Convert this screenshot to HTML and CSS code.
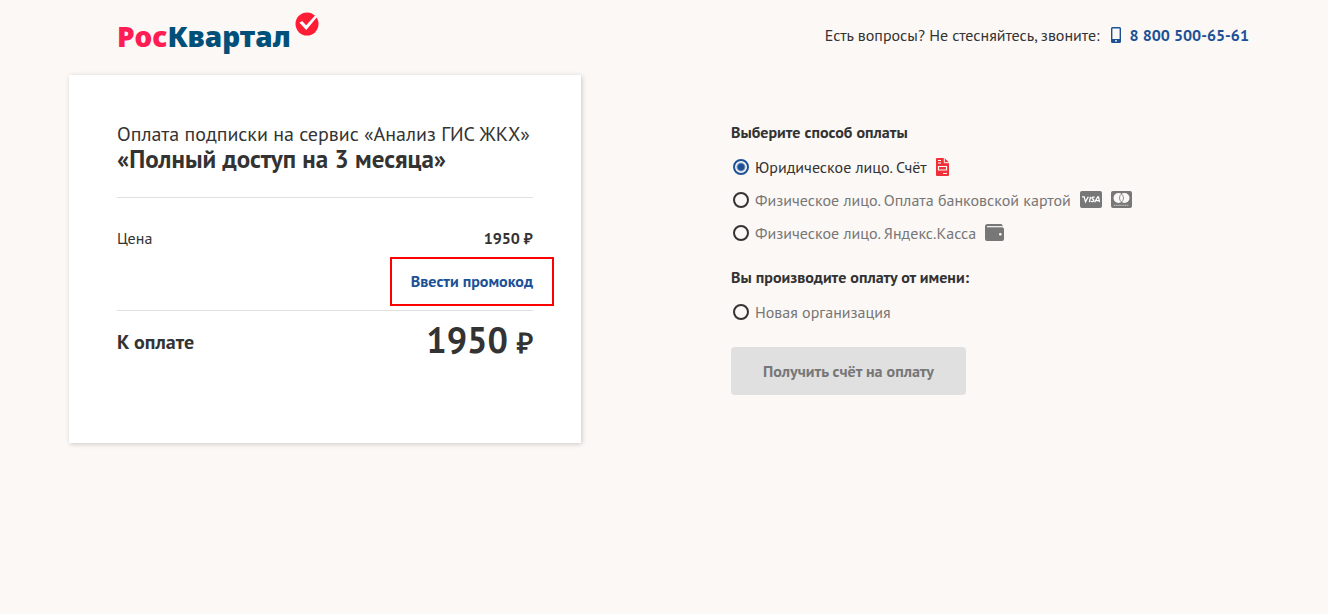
FILE: index.html
```html
<!DOCTYPE html>
<html lang="ru">
<head>
    <meta charset="UTF-8">
    <meta name="viewport" content="width=device-width, initial-scale=1.0">
    <title>РосКвартал — оплата подписки</title>
    <link rel="stylesheet" href="styles.css">
</head>
<body>

<div class="page">
    <header class="header">
        <a class="logo" href="#">
            <span class="logo__text"><span class="logo__accent">Рос</span>Квартал</span>
            <svg class="logo__mark" width="24" height="24" viewBox="0 0 24 24" aria-hidden="true">
                <circle cx="12" cy="12" r="11.5" fill="#ff1d36"/>
                <path d="M4.5 10.8 7.2 9l3.900 4.300L20.600 3l1.600 1.700L11.300 18z" fill="#fff"/>
            </svg>
        </a>
        <div class="contacts">
            <span>Есть вопросы? Не стесняйтесь, звоните:</span>
            <a class="contacts__phone" href="tel:88005006561">
                <svg width="10" height="16" viewBox="0 0 10 16" aria-hidden="true">
                    <path fill="#1c5196" fill-rule="evenodd" d="M1.5 0h7A1.5 1.5 0 0 1 10 1.500v13A1.500 1.500 0 0 1 8.500 16h-7A1.500 1.500 0 0 1 0 14.500v-13A1.500 1.500 0 0 1 1.500 0zM1.400 1.500V12h7.200V1.500zM4 13.200v1.400h2v-1.400z"/>
                </svg>
                8 800 500-65-61
            </a>
        </div>
    </header>

    <main class="checkout">
        <section class="order">
            <div class="order__head">
                <p class="order__caption">Оплата подписки на сервис «Анализ ГИС ЖКХ»</p>
                <h1 class="order__title">«Полный доступ на 3 месяца»</h1>
            </div>
            <div class="order__details">
                <div class="order__row">
                    <span>Цена</span>
                    <span class="order__price">1950 <span class="ruble">₽</span></span>
                </div>
                <button class="order__promo" type="button">Ввести промокод</button>
            </div>
            <div class="order__row order__row--total">
                <span class="order__label">К оплате</span>
                <span class="order__total">1950 <span class="ruble ruble--large">₽</span></span>
            </div>
        </section>

        <form class="payment">
            <fieldset class="payment__group">
                <legend class="payment__legend">Выберите способ оплаты</legend>
                <label class="option">
                    <input class="option__input" type="radio" name="method" checked>
                    <span class="option__text">Юридическое лицо. Счёт</span>
                    <svg width="13" height="18" viewBox="0 0 13 18" aria-hidden="true">
                        <path d="M1 0h7.500L13 4.500V17a1 1 0 0 1-1 1H1a1 1 0 0 1-1-1V1a1 1 0 0 1 1-1z" fill="#ef3039"/>
                        <path d="M8.300 0v4.700H13M2 2.500h3M2 5h3M7 15.500h4" fill="none" stroke="#fcf8f5" stroke-width="1"/>
                        <path d="M2.500 8.500h8v3.500h-8z" fill="none" stroke="#fcf8f5" stroke-width="1.200"/>
                    </svg>
                </label>
                <label class="option">
                    <input class="option__input" type="radio" name="method">
                    <span class="option__text">Физическое лицо. Оплата банковской картой</span>
                    <svg width="22" height="17" viewBox="0 0 22 17" aria-hidden="true">
                        <rect width="22" height="17" rx="2" fill="#777"/>
                        <path d="M2 5.800h2.200l1.300 5L8.300 5.800M10.500 5.800 9.400 11.200M14.600 6.400c-1.300-.6-2.700-.3-2.700.7 0 1.100 2 1 1.900 2.300-.1 1.300-1.900 1.400-3 .8M14.700 11.200 17.700 6h.8l1 5.200M16 9.600h3" fill="none" stroke="#fff" stroke-width="1.300"/>
                    </svg>
                    <svg width="21" height="17" viewBox="0 0 21 17" aria-hidden="true">
                        <rect width="21" height="17" rx="2" fill="#777"/>
                        <circle cx="7.500" cy="7" r="5" fill="#fcf8f5"/>
                        <circle cx="13.500" cy="7" r="5" fill="#fcf8f5"/>
                        <path d="M10.500 3a5 5 0 0 0 0 8 5 5 0 0 0 0-8z" fill="none" stroke="#777" stroke-width=".8"/>
                        <path d="M3 14.300h15" stroke="#ccc" stroke-width="1" stroke-dasharray="1.500 .6"/>
                    </svg>
                </label>
                <label class="option">
                    <input class="option__input" type="radio" name="method">
                    <span class="option__text">Физическое лицо. Яндекс.Касса</span>
                    <svg width="19" height="17" viewBox="0 0 19 17" aria-hidden="true">
                        <path d="M2.500 0H16a1.500 1.500 0 0 1 1.500 1.500V3.500a1.500 1.500 0 0 1 1.500 1.500V15a2 2 0 0 1-2 2H2a2 2 0 0 1-2-2V2.500A2.500 2.500 0 0 1 2.500 0z" fill="#777"/>
                        <path d="M2 2.700h15.500" stroke="#fcf8f5" stroke-width="1.200"/>
                        <circle cx="15.300" cy="10.300" r="1.300" fill="#fff"/>
                    </svg>
                </label>
            </fieldset>
            <fieldset class="payment__group">
                <legend class="payment__legend">Вы производите оплату от имени:</legend>
                <label class="option">
                    <input class="option__input" type="radio" name="payer">
                    <span class="option__text">Новая организация</span>
                </label>
            </fieldset>
            <button class="payment__submit" type="submit" disabled>Получить счёт на оплату</button>
        </form>
    </main>
</div>

</body>
</html>
```
FILE: styles.css
```css
* {
    box-sizing: border-box;
}
body {
    margin: 0;
    background: #fcf8f5;
    color: #333;
    font: 16px/24px "PT Sans", "Noto Sans", sans-serif;
}
button {
    font: inherit;
    cursor: pointer;
}
.page {
    max-width: 1190px;
    margin: 0 auto;
    padding-bottom: 48px;
}
.header {
    display: flex;
    justify-content: space-between;
    align-items: flex-start;
    min-height: 75px;
    padding: 12px 10px 0 48px;
}
.logo {
    display: flex;
    gap: 4px;
    color: #00507a;
    text-decoration: none;
}
.logo__text {
    padding-top: 8px;
    font-family: "Noto Sans", sans-serif;
    font-size: 28px;
    font-weight: 900;
    line-height: 32px;
}
.logo__accent {
    color: #ff1d53;
}
.contacts {
    display: flex;
    gap: 11px;
    padding-top: 11px;
}
.contacts__phone {
    display: flex;
    align-items: center;
    gap: 9px;
    color: #1c5196;
    font-weight: 700;
    text-decoration: none;
}
.checkout {
    display: grid;
    grid-template-columns: 512fr 528fr;
    gap: 150px;
    align-items: start;
}
.order {
    padding: 48px 48px 76px;
    background: #fff;
    box-shadow: 1px 1px 5px rgba(0, 0, 0, 0.2);
}
.order__head {
    padding-bottom: 24px;
    border-bottom: 1px solid #e0e0e0;
}
.order__caption {
    margin: 0;
    font-size: 20px;
    line-height: 22px;
    white-space: nowrap;
}
.order__title {
    margin: 0;
    font-size: 25px;
    line-height: 28px;
}
.order__details {
    display: flex;
    flex-direction: column;
    padding: 28px 0 4px;
    border-bottom: 1px solid #e0e0e0;
}
.order__row {
    display: flex;
    justify-content: space-between;
    align-items: center;
}
.order__row--total {
    height: 56px;
    padding-top: 6px;
}
.order__price {
    font-weight: 700;
}
.order__promo {
    align-self: flex-end;
    margin: 7px -21px 0 0;
    padding: 0 19px;
    border: 2px solid #f00;
    background: none;
    color: #1c5196;
    font-weight: 700;
    line-height: 45px;
}
.order__label {
    font-size: 20px;
    font-weight: 700;
}
.order__total {
    font-size: 36px;
    font-weight: 700;
}
.ruble {
    font-family: "Open Sans", sans-serif;
    font-size: 15px;
    line-height: 1;
}
.ruble--large {
    font-size: 28px;
}
.payment {
    padding-top: 45px;
}
.payment__group {
    margin: 0 0 16px;
    padding: 0;
    border: 0;
}
.payment__legend {
    margin-bottom: 6px;
    padding: 0;
    font-weight: 700;
}
.option {
    display: flex;
    align-items: center;
    gap: 9px;
    min-height: 33px;
    color: #777;
}
.option:has(:checked) {
    color: #333;
}
.option__input {
    appearance: none;
    width: 16px;
    height: 16px;
    margin: 0 -3px 0 2px;
    border: 2px solid #333;
    border-radius: 50%;
}
.option__input:checked {
    border-color: #1c5196;
    background: radial-gradient(circle, #1c5196 3px, transparent 5px);
}
.payment__submit {
    margin-top: 3px;
    padding: 0 32px;
    border: 0;
    border-radius: 4px;
    background: #e0e0e0;
    color: #777;
    font-weight: 700;
    line-height: 48px;
}
@media (max-width: 1100px) {
    .checkout {
        gap: 48px;
    }
    .order__caption {
        white-space: normal;
    }
}
```
